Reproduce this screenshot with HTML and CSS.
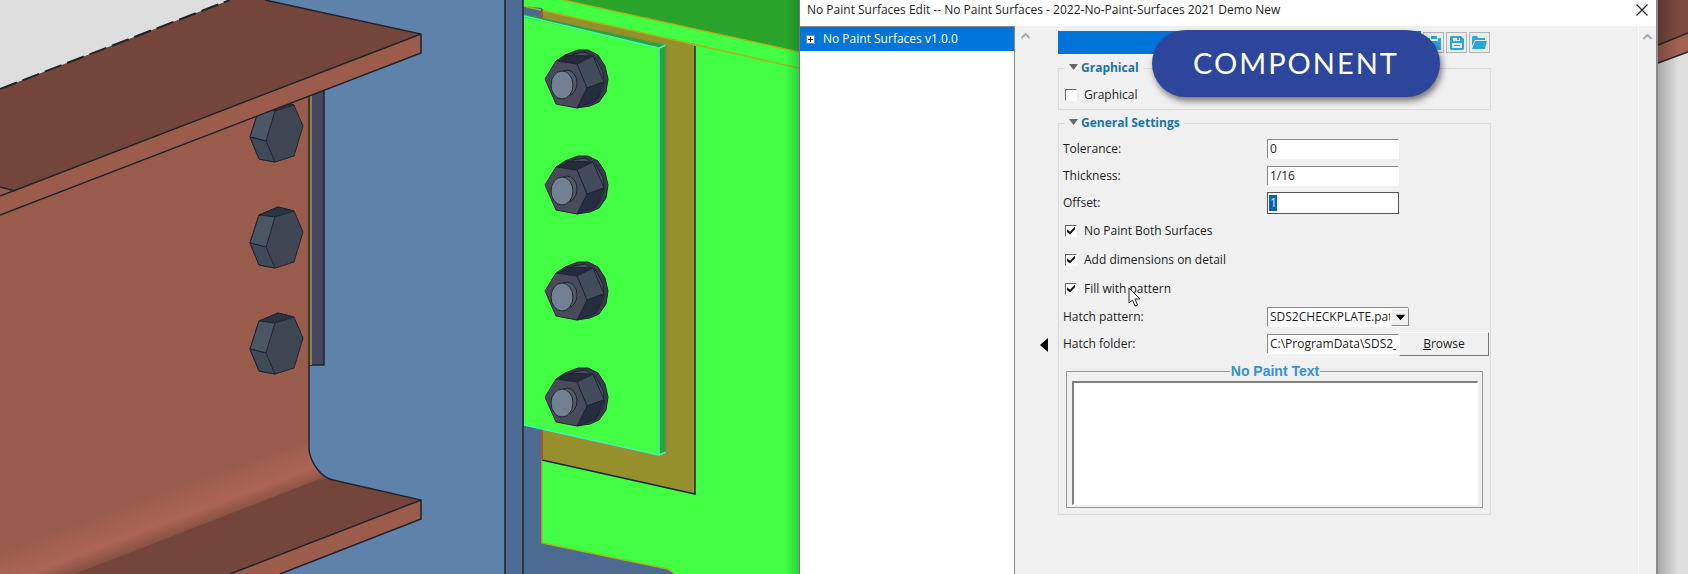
FILE: index.html
```html
<!DOCTYPE html>
<html lang="en">
<head>
<meta charset="utf-8">
<title>No Paint Surfaces Edit</title>
<link rel="stylesheet" href="styles.css">
</head>
<body>
<main class="workspace">
  <svg class="scene" viewBox="0 0 799 574" preserveAspectRatio="xMaxYMin slice" role="img" aria-label="Bolted steel connection">
    <defs>
      <linearGradient id="shade"><stop offset="0" stop-color="#063" stop-opacity="0"/><stop offset="1" stop-color="#063" stop-opacity=".3"/></linearGradient>
      <linearGradient id="fillet" gradientUnits="userSpaceOnUse" x1="180" y1="486" x2="196" y2="529">
        <stop offset="0" stop-color="#995c4c"/><stop offset=".35" stop-color="#a66152"/><stop offset=".65" stop-color="#ac6455"/><stop offset=".8" stop-color="#9b5b4c"/><stop offset="1" stop-color="#844f41"/>
      </linearGradient>
      <clipPath id="under-flange"><path d="M0 215L325 90V574H0z"/></clipPath>
      <g id="head" class="thin">
        <path fill="#3e4654" d="M250 243L259 215L278 207L294 211L303 232L294 262L275 268L259 265z"/>
        <path fill="#2c3340" d="M259 215L278 207L294 211L275 217z"/>
        <path fill="#4b5664" d="M250 243L259 215L275 217L266 247z"/>
        <path fill="#3f4a59" d="M250 243L266 247L275 268L259 265z"/>
      </g>
      <g id="nut" class="thin">
        <path fill="#353b4b" d="M565 55L578 50H588L598 55L605 66L608 79L606 92L599 102L590 106L577 108z"/>
        <path fill="#484e5f" d="M573 54L585 52L596 59L603 72L604 86L598 98L590 103z"/>
        <path fill="#252b3c" d="M556 61L565 55L593 56L577 64z"/>
        <path fill="#424b5a" d="M577 64L593 56L604 82L587 88z"/>
        <path fill="#272d40" d="M587 88L604 82L596 101L577 108z"/>
        <path fill="#484c5a" d="M545 79L556 61L577 64L587 88L577 108L556 104z"/>
        <ellipse fill="#4e5a69" cx="567" cy="83" rx="10" ry="13"/>
        <ellipse fill="#718092" cx="562" cy="85" rx="11" ry="14"/>
      </g>
    </defs>
    <path fill="#5f82aa" d="M0 0H799V574H0z"/>
    <path fill="#dedede" d="M0 0H230L0 89z"/>
    <path fill="#434763" class="line" d="M309 85H324V365H309z"/>
    <path fill="#8a8252" d="M309 90H312V365H309z"/>
    <path fill="#995c4c" d="M0 180L309 92V450Q311 474 333 480L230 574H0z"/>
    <path fill="url(#fillet)" d="M0 548L309 442Q309 473 333 480L90 574H0z"/>
    <path fill="#74463b" d="M322 478L333 480L421 500L230 574H75z"/>
    <path fill="#9b5c4c" d="M421 500V519L280 574H230z"/>
    <path class="line" d="M309 92V450C311 464 322 478 333 480L421 500V519L280 574M421 500L230 574"/>
    <g clip-path="url(#under-flange)"><use href="#head" y="-106"/></g>
    <use href="#head"/><use href="#head" y="106"/>
    <path fill="#9b5c4c" d="M0 196L421 34V53L0 215z"/>
    <path fill="#74463b" d="M0 89L230 0H265L421 34L15 191L0 187z"/>
    <path class="line" d="M265 0L421 34V53L0 215M421 34L0 196M0 187L15 191"/>
    <path class="line dashed" d="M0 89L230 0"/>

    <path fill="#4e6b94" d="M505 0H523V574H505z"/>
    <path fill="#4d6b91" d="M523 0H799V574H523z"/>
    <path fill="#42ff43" d="M523 0H799V574H675L668 569L542 543V8L523 6z"/>
    <path fill="#4d6b91" d="M524 8L542 12V20L524 15z"/>
    <path fill="#29a329" d="M563 0H799V52z"/>
    <path fill="#95902b" d="M542 10L695 45V494L542 460z"/>
    <path class="amber" d="M563 0L799 52M523 6L799 68M542 460V543L668 569L675 574"/>
    <path class="line" d="M505 0V574M523 0V574M695 46V494L542 460"/>
    <path fill="#b0512b" d="M541 9H543V20H541zM541 430H543V460H541z"/>
    <path fill="#28a53a" d="M524 14L666 45V452L659 455V48L524 17z"/>
    <path fill="#42ff43" d="M524 17L659 48V455L524 425z"/>
    <path class="cyan" d="M524 16L659 48V455L524 425M659 48L666 45M659 455L666 452"/>
    <path class="edge" d="M666 45V452"/>
    <use href="#nut"/><use href="#nut" y="106"/><use href="#nut" y="212"/><use href="#nut" y="318"/>
    <path fill="url(#shade)" d="M785 0H799V574H785z"/>
  </svg>

  <section class="dialog" aria-label="No Paint Surfaces Edit">
    <header class="titlebar">
      <h1 class="title">No Paint Surfaces Edit -- No Paint Surfaces - 2022-No-Paint-Surfaces 2021 Demo New</h1>
      <button class="close" aria-label="Close"><svg width="12" height="12" viewBox="0 0 12 12"><path d="M.5.5l11 11M11.500.5l-11 11"/></svg></button>
    </header>
    <div class="content">
      <nav class="tree">
        <button class="tree-item"><svg width="9" height="9" viewBox="0 0 9 9"><path fill="#fff" stroke="#888" d="M.5.5h8v8h-8z"/><path stroke="#222" d="M2 4.500h5M4.500 2v5"/></svg>No Paint Surfaces v1.0.0</button>
      </nav>
      <div class="gutter">
        <svg class="chevron" width="9" height="6" viewBox="0 0 9 6"><path d="M.5 5l4-4 4 4"/></svg>
        <button class="collapse" aria-label="Collapse panel"><svg width="8" height="14" viewBox="0 0 8 14"><path d="M8 0v14L0 7z"/></svg></button>
      </div>
      <form class="form">
        <div class="toolbar">
          <div class="banner"></div>
          <button type="button" class="tool" aria-label="Paste"><svg width="16" height="16" viewBox="0 0 16 16"><path fill="#2ba5dc" d="M1 3h14v12H1z"/><path fill="#fff" d="M4 3h8v3H4z"/><path fill="#2ba5dc" d="M5 1h6v3H5z"/></svg></button>
          <button type="button" class="tool" aria-label="Save"><svg width="14" height="14" viewBox="0 0 14 14"><path fill="#2ba5dc" fill-rule="evenodd" d="M1 0h10l3 3v10l-1 1H1l-1-1V1zM3 2v3h7V2zM2 7v5h10V7z"/><path fill="#2ba5dc" d="M7 2h2v2H7zM4 9h6v1H4z"/></svg></button>
          <button type="button" class="tool" aria-label="Open"><svg width="15" height="13" viewBox="0 0 15 13"><path fill="#2ba5dc" d="M0 1l1-1h4l1 2h7v2H3L0 10zM3 5h12l-2 8H0z"/></svg></button>
        </div>
        <fieldset class="group graphical">
          <legend class="legend"><svg width="9" height="6" viewBox="0 0 9 6"><path d="M0 0h9L4.500 6z"/></svg>Graphical</legend>
          <label class="check"><input type="checkbox">Graphical</label>
        </fieldset>
        <fieldset class="group general">
          <legend class="legend"><svg width="9" height="6" viewBox="0 0 9 6"><path d="M0 0h9L4.500 6z"/></svg>General Settings</legend>
          <div class="row"><label for="tolerance">Tolerance:</label><input class="field" id="tolerance" value="0"></div>
          <div class="row"><label for="thickness">Thickness:</label><input class="field" id="thickness" value="1/16"></div>
          <div class="row"><label for="offset">Offset:</label><input class="field active" id="offset" value="1"></div>
          <label class="check"><input type="checkbox" checked>No Paint Both Surfaces</label>
          <label class="check"><input type="checkbox" checked>Add dimensions on detail</label>
          <label class="check">
            <input type="checkbox" checked>Fill with pattern
            <svg class="cursor" width="13" height="20" viewBox="0 0 13 20"><path fill="#fff" stroke="#222" d="M1 1v15l3.500-3 2.500 6 2.500-1-2.500-6h5z"/></svg>
          </label>
          <div class="row"><label for="pattern">Hatch pattern:</label>
            <div class="combo"><select class="field" id="pattern"><option>SDS2CHECKPLATE.pat</option></select><svg class="drop" viewBox="0 0 17 17" width="17" height="17"><path d="M4 6h10l-5 6z"/></svg></div>
          </div>
          <div class="row"><label for="folder">Hatch folder:</label><input class="field" id="folder" value="C:\ProgramData\SDS2_2022"><button type="button" class="browse"><u>B</u>rowse</button></div>
          <fieldset class="note">
            <legend><label for="note">No Paint Text</label></legend>
            <textarea id="note"></textarea>
          </fieldset>
        </fieldset>
      </form>
      <div class="scroll"><svg class="chevron" width="9" height="6" viewBox="0 0 9 6"><path d="M.5 5l4-4 4 4"/></svg></div>
    </div>
    <div class="badge">COMPONENT</div>
  </section>

  <svg class="backdrop" viewBox="0 0 30 574" preserveAspectRatio="xMinYMin slice" aria-hidden="true">
    <defs><linearGradient id="cast"><stop offset="0" stop-opacity=".24"/><stop offset="1" stop-opacity="0"/></linearGradient></defs>
    <path fill="#dedede" d="M0 0H30V574H0z"/>
    <path fill="#7b493d" d="M0 0H30V33L0 45z"/>
    <path fill="#a36151" d="M0 45L30 33V52L0 63z"/>
    <path class="line" d="M0 45L30 33M0 63L30 52"/>
    <path fill="url(#cast)" d="M0 0H20V574H0z"/>
  </svg>
</main>
</body>
</html>
```
FILE: styles.css
```css
* { box-sizing: border-box; }
body { margin: 0; font: 12px/18px "Open Sans", "Noto Sans", sans-serif; color: #1c1c1c; }
button, input, select, textarea { font: inherit; color: inherit; margin: 0; border-radius: 0; }
svg { display: block; flex: none; }

.workspace { display: grid; grid-template-columns: minmax(0, 1fr) 859px 30px; height: 100vh; min-height: 540px; overflow: hidden; background: #5f82aa; }
.scene, .backdrop { width: 100%; height: 100%; min-height: 0; }
.line { stroke: #20242a; stroke-width: 1.5; }
path.line:not([fill]) { fill: none; }
.dashed { stroke-width: 2; stroke-dasharray: 18 6; }
.thin path, .thin ellipse { stroke: #202430; stroke-width: 1; }
.amber { fill: none; stroke: #a5b51c; stroke-width: 1.5; }
.cyan { fill: none; stroke: #42f5b0; stroke-width: 1.5; }
.edge { fill: none; stroke: #7b8558; stroke-width: 1.5; }

.dialog { position: relative; display: flex; flex-direction: column; min-width: 0; min-height: 0; background: #f0f0f0; border-left: 1px solid #777; border-right: 2px solid #8a8a8a; }
.titlebar { display: flex; align-items: center; justify-content: space-between; height: 26px; padding: 0 8px 6px 7px; background: #fff; }
.title { margin: 0; font-size: 12px; font-weight: 400; }
.close { padding: 0; border: 0; background: none; }
.close path { fill: none; stroke: #222; stroke-width: 1.2; }
.content { flex: 1; display: flex; min-height: 0; }
.tree { width: 215px; background: #fff; border: 1px solid #888; border-width: 1px 1px 0 0; }
.tree-item { display: flex; align-items: center; gap: 8px; width: 100%; height: 24px; padding: 0 6px; border: 0; background: #0074d9; color: #fff; }
.gutter { width: 43px; padding: 7px 6px; }
.chevron path { fill: none; stroke: #aaa; stroke-width: 2; }
.collapse { display: block; margin: 299px 0 0 19px; padding: 0; border: 0; background: none; }
.form { width: 433px; padding-top: 5px; }
.toolbar { display: flex; align-items: center; gap: 2px; padding-right: 1px; }
.banner { flex: 1; height: 23px; background: #0074d9; }
.tool { display: grid; place-items: center; width: 21px; height: 21px; padding: 0; border: 1px solid #b4b4b4; background: #ececec; }

.group { margin: 0; padding: 0 7px 6px 4px; border: 1px solid #dcdcdc; min-width: 0; }
.graphical { margin-top: 5px; padding-bottom: 0; }
.graphical .check { margin-top: 3px; }
.general { margin-top: 4px; }
.legend { display: flex; gap: 3px; margin-left: 2px; padding: 0 4px; font-weight: 700; color: #1a72ad; }
.legend svg { margin-top: 5px; fill: #666; }
.row { display: flex; align-items: center; height: 27px; }
.row > label { width: 204px; flex: none; }
.general .legend + .row { margin-top: 3px; }
.field { width: 132px; height: 20px; padding: 0 2px; border: 1px solid #fff; border-top-color: #888; border-left-color: #888; background: #fff; outline: 0; }
.active { height: 22px; border: 1px solid #555; color: #d8ecff; background: linear-gradient(#0b62b4, #0b62b4) 1px 2px / 8px 16px no-repeat #fff; }
.check { position: relative; display: flex; align-items: center; gap: 7px; height: 29px; padding-left: 2px; }
.check input { appearance: none; display: grid; place-items: center; width: 12px; height: 12px; background: #fff; border: 1px solid #fff; border-top-color: #666; border-left-color: #666; }
.check input:checked::before { content: ""; width: 8px; height: 8px; background: #111; clip-path: polygon(0 35%, 38% 65%, 100% 0, 100% 35%, 38% 100%, 0 70%); }
.cursor { position: absolute; left: 65px; top: 13px; }
.combo { position: relative; width: 142px; }
.combo .field { display: block; width: 100%; padding-right: 18px; appearance: none; }
.drop { position: absolute; right: 0; top: 1px; width: 18px; height: 18px; background: #f0f0f0; border: 1px solid #888; border-top-color: #fff; border-left-color: #fff; pointer-events: none; }
.browse { flex: 1; height: 24px; margin-right: -6px; padding: 0; border: 1px solid #777; border-top-color: #fff; border-left-color: #fff; background: #f0f0f0; }
.note { margin: 5px 0 0 3px; padding: 1px 4px 2px 5px; border: 1px solid #999; min-width: 0; }
.note legend { margin: 0 auto; padding: 0 1px; font: 700 14px/18px "Liberation Sans", Arial, sans-serif; color: #3392d8; }
.note textarea { display: block; width: 100%; height: 124px; resize: none; background: #fff; border: 1px solid #fff; border-top: 2px solid #808080; border-left: 2px solid #808080; outline: 0; }
.scroll { width: 18px; margin-left: auto; padding: 8px 4px; border-left: 1px solid #fafafa; }
.badge { position: absolute; left: 352px; top: 30px; width: 288px; height: 67px; border-radius: 34px; background: #2d459b; color: #fff; text-align: center; font: 400 29px/66px Lato, sans-serif; letter-spacing: 2px; box-shadow: 2px 4px 6px rgba(0, 0, 0, .5); }
```
